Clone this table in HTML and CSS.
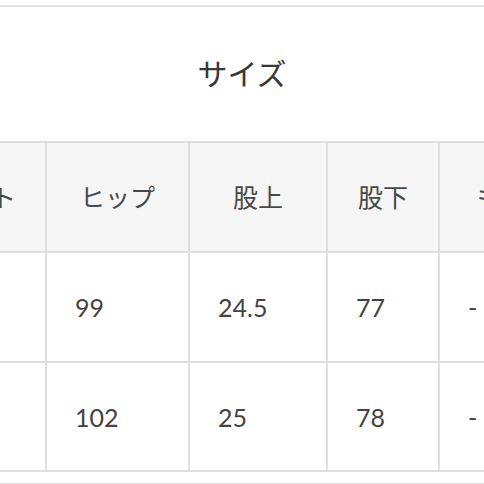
FILE: index.html
```html
<!DOCTYPE html>
<html lang="ja">
<head>
<meta charset="utf-8">
<link rel="stylesheet" href="styles.css">
</head>
<body>
<div class="sheet">
  <div class="title">サイズ</div>
  <div class="grid">
    <div class="cell head">ウエスト</div>
    <div class="cell head">ヒップ</div>
    <div class="cell head">股上</div>
    <div class="cell head">股下</div>
    <div class="cell head">もも周り</div>

    <div class="cell">70</div>
    <div class="cell">99</div>
    <div class="cell">24.5</div>
    <div class="cell">77</div>
    <div class="cell">-</div>

    <div class="cell">74</div>
    <div class="cell">102</div>
    <div class="cell">25</div>
    <div class="cell">78</div>
    <div class="cell">-</div>
  </div>
  <div class="next"></div>
</div>
</body>
</html>
```

FILE: styles.css
```css
html, body {
  margin: 0;
  padding: 0;
  background: #ffffff;
  overflow: hidden;
  width: 484px;
  height: 484px;
}
.sheet {
  margin-top: 5px;
  border-top: 2px solid #e4e4e4;
  font-family: Lato, "Noto Sans CJK JP", sans-serif;
  color: #434343;
}
.title {
  height: 136px;
  box-sizing: border-box;
  padding-bottom: 4px;
  display: flex;
  align-items: center;
  justify-content: center;
  font-family: "Noto Sans CJK JP", sans-serif;
  font-size: 30px;
  color: #383838;
  border-bottom: 2px solid #dedede;
}
.grid {
  display: grid;
  grid-template-columns: 158px 141px 136px 110px 174px;
  grid-template-rows: 108px 108px 107px;
  gap: 2px;
  background: #dedede;
  margin-left: -113px;
  width: max-content;
  border-bottom: 2px solid #dedede;
}
.cell {
  background: #ffffff;
  display: flex;
  align-items: center;
  padding-left: 28px;
  font-size: 25px;
  white-space: nowrap;
  overflow: hidden;
}
.cell.head {
  background: #f6f6f6;
  justify-content: center;
  padding-left: 0;
  padding-bottom: 3px;
  box-sizing: border-box;
  font-family: "Noto Sans CJK JP", sans-serif;
  font-size: 25px;
  color: #484848;
}
.next {
  margin-top: 11px;
  border-top: 2px solid #dedede;
  height: 20px;
}
```
